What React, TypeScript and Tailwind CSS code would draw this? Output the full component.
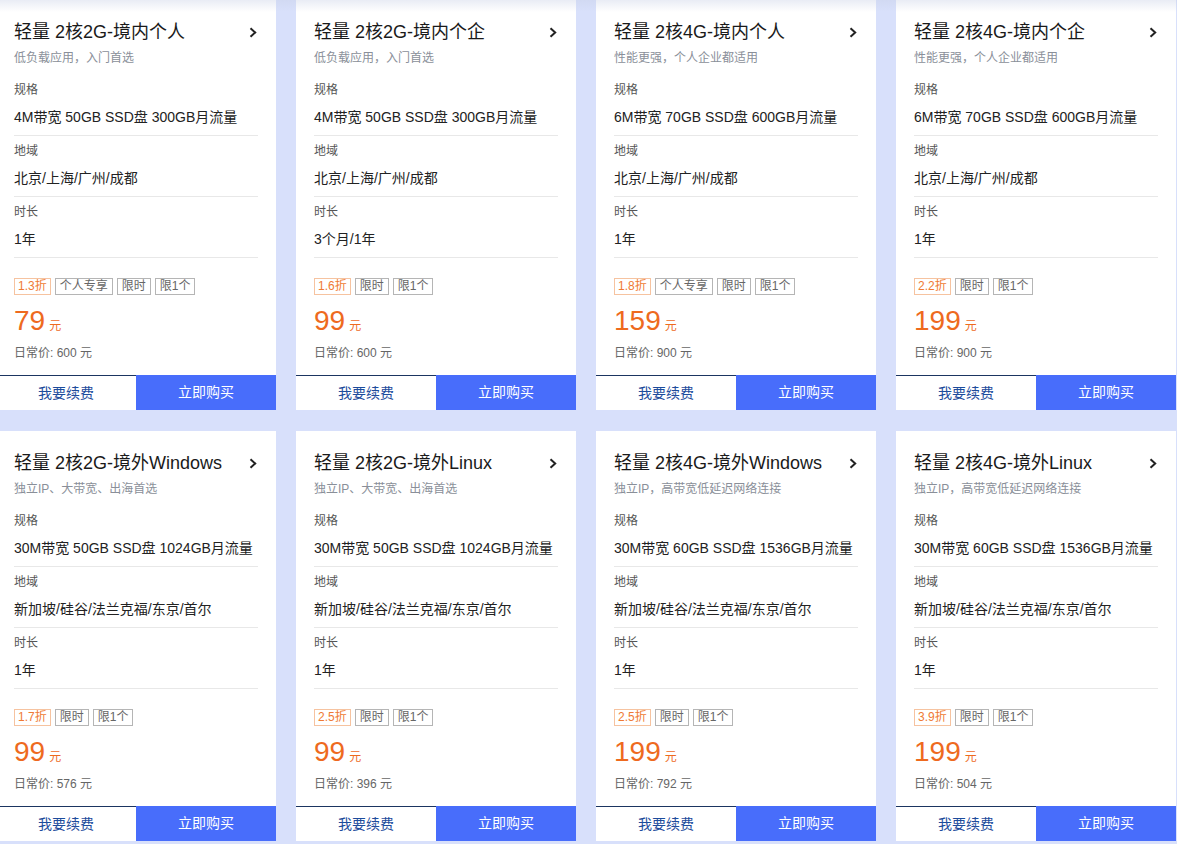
import React from "react";

type Plan = {
  title: string;
  desc: string;
  spec: string;
  region: string;
  period: string;
  discount: string;
  tags: string[];
  price: string;
  origin: string;
};

const CN = "Noto Sans CJK SC";
const HOME = "北京/上海/广州/成都";
const ABROAD = "新加坡/硅谷/法兰克福/东京/首尔";

const plans: Plan[] = [
  { title: "轻量 2核2G-境内个人", desc: "低负载应用，入门首选", spec: "4M带宽 50GB SSD盘 300GB月流量", region: HOME, period: "1年", discount: "1.3折", tags: ["个人专享", "限时", "限1个"], price: "79", origin: "600" },
  { title: "轻量 2核2G-境内个企", desc: "低负载应用，入门首选", spec: "4M带宽 50GB SSD盘 300GB月流量", region: HOME, period: "3个月/1年", discount: "1.6折", tags: ["限时", "限1个"], price: "99", origin: "600" },
  { title: "轻量 2核4G-境内个人", desc: "性能更强，个人企业都适用", spec: "6M带宽 70GB SSD盘 600GB月流量", region: HOME, period: "1年", discount: "1.8折", tags: ["个人专享", "限时", "限1个"], price: "159", origin: "900" },
  { title: "轻量 2核4G-境内个企", desc: "性能更强，个人企业都适用", spec: "6M带宽 70GB SSD盘 600GB月流量", region: HOME, period: "1年", discount: "2.2折", tags: ["限时", "限1个"], price: "199", origin: "900" },
  { title: "轻量 2核2G-境外Windows", desc: "独立IP、大带宽、出海首选", spec: "30M带宽 50GB SSD盘 1024GB月流量", region: ABROAD, period: "1年", discount: "1.7折", tags: ["限时", "限1个"], price: "99", origin: "576" },
  { title: "轻量 2核2G-境外Linux", desc: "独立IP、大带宽、出海首选", spec: "30M带宽 50GB SSD盘 1024GB月流量", region: ABROAD, period: "1年", discount: "2.5折", tags: ["限时", "限1个"], price: "99", origin: "396" },
  { title: "轻量 2核4G-境外Windows", desc: "独立IP，高带宽低延迟网络连接", spec: "30M带宽 60GB SSD盘 1536GB月流量", region: ABROAD, period: "1年", discount: "2.5折", tags: ["限时", "限1个"], price: "199", origin: "792" },
  { title: "轻量 2核4G-境外Linux", desc: "独立IP，高带宽低延迟网络连接", spec: "30M带宽 60GB SSD盘 1536GB月流量", region: ABROAD, period: "1年", discount: "3.9折", tags: ["限时", "限1个"], price: "199", origin: "504" },
];

function Chevron() {
  return (
    <svg width="8" height="11" viewBox="0 0 8 11" fill="none">
      <path d="M1.5 1.2 L6.2 5.5 L1.5 9.8" stroke="#222" strokeWidth="2" />
    </svg>
  );
}

function Field({ label, value }: { label: string; value: string }) {
  return (
    <div className="pt-[6px] border-b border-[#e8e8e8]">
      <div className="text-[12px] leading-[18px] text-[#555]">{label}</div>
      <div className="mt-[8px] mb-[8px] text-[14px] leading-[20px] text-[#222]">{value}</div>
    </div>
  );
}

function Card({ p }: { p: Plan }) {
  return (
    <div className="bg-white h-[410px] flex flex-col">
      <div className="px-[18px]">
        <div className="pt-[21px] flex items-center justify-between">
          <span className="text-[18px] leading-[22px] text-[#1a1a1a]">{p.title}</span>
          <span className="mr-[1px]">
            <Chevron />
          </span>
        </div>
        <div className="mt-[6px] text-[12px] leading-[18px] text-[#8a8f99]">{p.desc}</div>
        <div className="mt-[8px]">
          <Field label="规格" value={p.spec} />
          <Field label="地域" value={p.region} />
          <Field label="时长" value={p.period} />
        </div>
        <div className="mt-[20px] flex gap-[4px]">
          <span className="h-[17px] px-[3px] border border-[#f6c3a0] text-[#ef7a33] text-[12px] leading-[15px]">
            {p.discount}
          </span>
          {p.tags.map((t) => (
            <span key={t} className="h-[17px] px-[4px] border border-[#b5b5b5] text-[#666] text-[12px] leading-[15px]">
              {t}
            </span>
          ))}
        </div>
        <div className="mt-[10px] flex items-baseline text-[#ee6a1e]">
          <span className="text-[28px] leading-[32px]">{p.price}</span>
          <span className="ml-[4px] text-[12px]">元</span>
        </div>
        <div className="mt-[7px] text-[12px] leading-[18px] text-[#666]">日常价: {p.origin} 元</div>
      </div>
      <div className="mt-auto flex h-[35px]">
        <button className="w-1/2 border-t border-[#1b3561] bg-white text-[14px] text-[#1d4c9c]">我要续费</button>
        <button className="w-1/2 bg-[#486dfb] text-[14px] text-white">立即购买</button>
      </div>
    </div>
  );
}

export default function App() {
  return (
    <div
      className="relative w-[1177px] h-[844px] overflow-hidden bg-[#d8e0fb]"
      style={{ fontFamily: `"Liberation Sans", "${CN}", sans-serif` }}
    >
      <div className="-ml-1 w-[1180px] grid grid-cols-4 gap-x-5 gap-y-[21px]">
        {plans.map((p, i) => (
          <Card key={i} p={p} />
        ))}
      </div>
      <div className="pointer-events-none absolute left-0 top-0 w-full h-[12px] bg-gradient-to-b from-[#c8d0e6]/40 to-transparent" />
    </div>
  );
}
